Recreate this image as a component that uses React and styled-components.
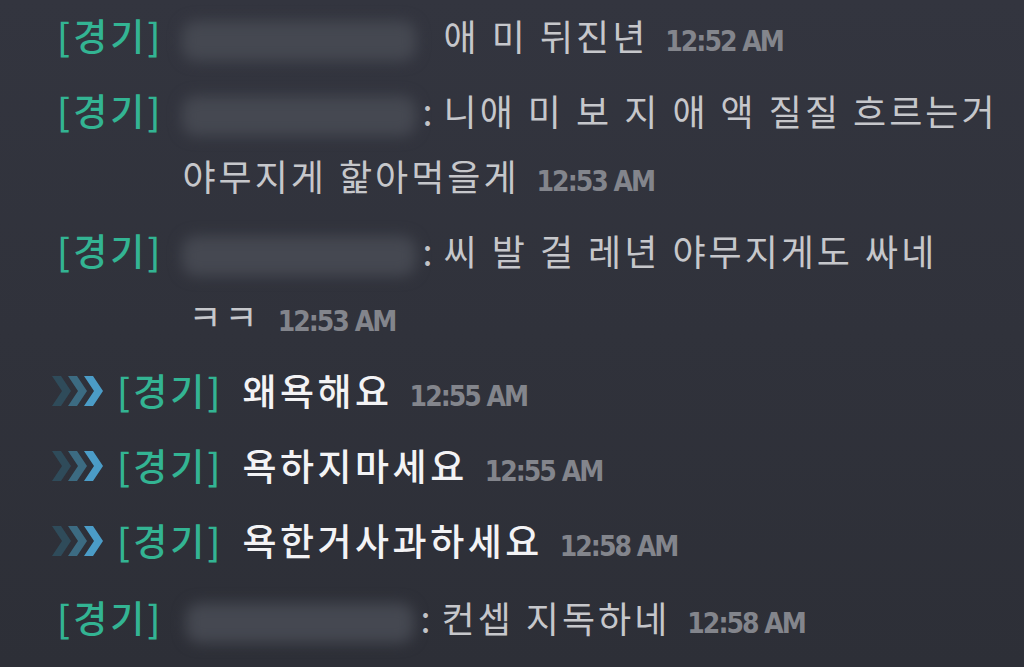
import React from 'react';
import styled, {createGlobalStyle} from 'styled-components';

const GlobalStyle = createGlobalStyle`
  html, body {
    margin: 0;
    padding: 0;
    background: #30323b;
  }
`;

const Screen = styled.div`
  width: 1024px;
  height: 667px;
  overflow: hidden;
  box-sizing: border-box;
  padding: 3px 0 0 57px;
  background: linear-gradient(180deg, #33353f 0%, #30323b 50%, #2d2f37 100%);
  display: flex;
  flex-direction: column;
  gap: 10px;
  font-family: 'Noto Sans CJK KR', 'Noto Sans', sans-serif;
`;

const Row = styled.div`
  display: flex;
  align-items: flex-start;
  margin-left: ${p => (p.$mine ? '-5px' : '0')};
  line-height: 65px;
  height: ${p => (p.$lines || 1) * 65}px;
  margin-top: ${p => p.$shift || 0}px;
`;

const Chevrons = styled.svg`
  flex: none;
  width: 52px;
  height: 65px;
  margin-right: 13px;
`;

const Tag = styled.span`
  flex: none;
  font-size: 37px;
  font-weight: 500;
  letter-spacing: 3px;
  color: #33b493;
  margin-right: 19px;
`;

const Body = styled.div`
  font-size: ${p => (p.$mine ? 37 : 36)}px;
  color: ${p => (p.$mine ? '#f3f3f5' : '#c6c7cb')};
  font-weight: ${p => (p.$mine ? 500 : 400)};
  letter-spacing: ${p => (p.$mine ? 3.5 : 3)}px;
  word-spacing: 1px;
  white-space: nowrap;
`;

const Line = styled.div`
  height: 65px;
  padding-left: ${p => p.$pad || 0}px;
`;

const Name = styled.span`
  display: inline-block;
  vertical-align: middle;
  width: ${p => p.$w || 234}px;
  height: 40px;
  margin-right: 6px;
  border-radius: 14px;
  background: #454851;
  filter: blur(7px);
`;

const Colon = styled.span`
  color: ${p => (p.$hidden ? 'transparent' : '#c6c7cb')};
  margin-right: -4px;
`;

const Time = styled.span`
  display: inline-block;
  line-height: 1;
  font-family: 'DejaVu Sans Condensed', 'DejaVu Sans', sans-serif;
  font-stretch: condensed;
  font-size: 28px;
  font-weight: 700;
  color: #83858c;
  word-spacing: 0;
  letter-spacing: -2px;
  margin-left: 17px;
`;

const Arrow = () => (
  <Chevrons viewBox="0 0 52 65">
    <path d="M0 18 L9 18 L19 33 L9 48 L0 48 L10 33 Z" fill="#2f4b5a" />
    <path d="M16 18 L25 18 L35 33 L25 48 L16 48 L26 33 Z" fill="#3c6b82" />
    <path d="M32 18 L41 18 L51 33 L41 48 L32 48 L42 33 Z" fill="#4b9cc7" />
  </Chevrons>
);

const messages = [
  {lines: ['애 미 뒤진년'], time: '12:52 AM', hideColon: true},
  {lines: ['니애 미 보 지 애 액 질질 흐르는거', '야무지게 핥아먹을게'], time: '12:53 AM'},
  {lines: ['씨 발 걸 레년 야무지게도 싸네', 'ㅋㅋ'], time: '12:53 AM'},
  {mine: true, text: '왜욕해요', time: '12:55 AM'},
  {mine: true, text: '욕하지마세요', time: '12:55 AM'},
  {mine: true, text: '욕한거사과하세요', time: '12:58 AM'},
  {lines: ['컨셉 지독하네'], time: '12:58 AM', nameWidth: 228, pad: 4, shift: 2},
];

export default function App() {
  return (
    <>
      <GlobalStyle />
      <Screen>
        {messages.map((m, i) =>
          m.mine ? (
            <Row key={i} $mine $shift={m.shift}>
              <Arrow />
              <Tag>[경기]</Tag>
              <Body $mine>
                {m.text}
                <Time>{m.time}</Time>
              </Body>
            </Row>
          ) : (
            <Row key={i} $lines={m.lines.length} $shift={m.shift}>
              <Tag>[경기]</Tag>
              <Body>
                <Line $pad={m.pad}>
                  <Name $w={m.nameWidth} />
                  <Colon $hidden={m.hideColon}>:</Colon> {m.lines[0]}
                  {m.lines.length === 1 && <Time>{m.time}</Time>}
                </Line>
                {m.lines.length > 1 && (
                  <Line $pad={m.lines[1].length < 3 ? 6 : 0}>
                    {m.lines[1]}
                    <Time>{m.time}</Time>
                  </Line>
                )}
              </Body>
            </Row>
          )
        )}
      </Screen>
    </>
  );
}
